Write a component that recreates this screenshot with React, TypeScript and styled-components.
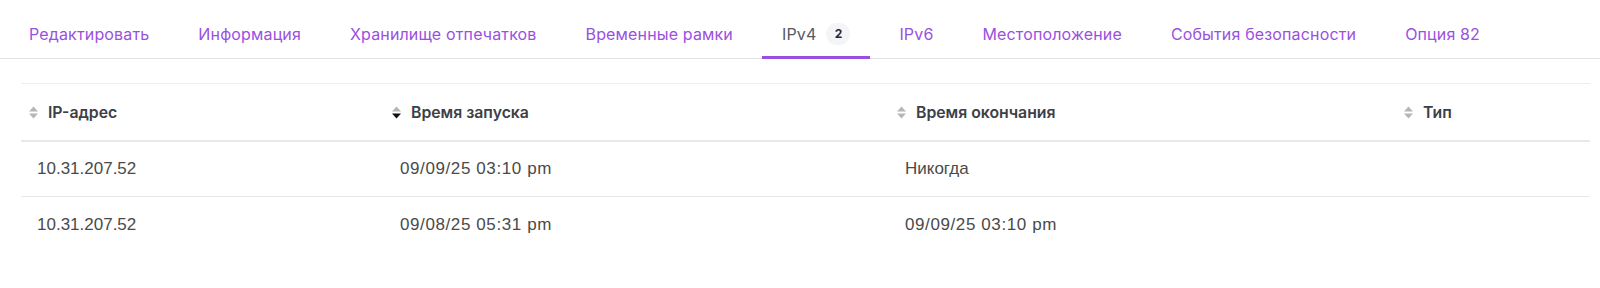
import React from "react";
import styled, { createGlobalStyle } from "styled-components";

const GlobalStyle = createGlobalStyle`
  html, body { margin: 0; padding: 0; background: #ffffff; }
  body { font-family: Inter, "Noto Sans", sans-serif; }
  * { box-sizing: border-box; }
`;

const Page = styled.div`
  width: 1600px;
  background: #ffffff;
`;

const TabBar = styled.nav`
  display: flex;
  align-items: stretch;
  height: 59px;
  padding-left: 9px;
  gap: 9px;
  border-bottom: 1px solid #e3e3e6;
`;

const Tab = styled.div<{ $active?: boolean }>`
  display: flex;
  align-items: center;
  gap: 10px;
  height: 59px;
  margin-bottom: -1px;
  padding: 8px 20px 0;
  font-family: Inter, "Noto Sans", sans-serif;
  font-size: 16px;
  letter-spacing: 0.15px;
  font-weight: 400;
  color: ${(p) => (p.$active ? "#555a62" : "#9a50e0")};
  box-shadow: ${(p) => (p.$active ? "inset 0 -3px 0 #9b4fe0" : "none")};
  white-space: nowrap;
  cursor: pointer;
`;

const Badge = styled.span`
  display: inline-flex;
  align-items: center;
  justify-content: center;
  min-width: 24px;
  height: 22px;
  padding: 0 6px;
  border-radius: 11px;
  background: #f4f5f7;
  color: #25282d;
  font-size: 12px;
  letter-spacing: 0;
  font-weight: 700;
`;

const Table = styled.div`
  margin: 24px 10px 0 21px;
  border-top: 1px solid #eceef1;
`;

const Row = styled.div<{ $head?: boolean; $last?: boolean }>`
  display: grid;
  grid-template-columns: 363px 505px 507px 1fr;
  align-items: center;
  height: ${(p) => (p.$head ? "58px" : "55px")};
  border-bottom: ${(p) =>
    p.$head ? "2px solid #e6e8ec" : p.$last ? "none" : "1px solid #e8e9ec"};
`;

const HeadCell = styled.div`
  display: flex;
  align-items: center;
  gap: 10px;
  padding-left: 8px;
  font-family: Inter, "Noto Sans", sans-serif;
  font-size: 15.8px;
  font-weight: 600;
  color: #3c4047;
`;

const Cell = styled.div<{ $date?: boolean }>`
  padding-left: 16px;
  font-family: "Liberation Sans", Arial, sans-serif;
  font-size: 17px;
  letter-spacing: ${(p) => (p.$date ? "0.6px" : "0")};
  color: #4a4a4a;
`;

const SortIcon = ({ dir }: { dir?: "asc" | "desc" }) => (
  <svg width="9" height="13" viewBox="0 0 9 13" aria-hidden>
    <polygon points="0,5.5 4.5,0.5 9,5.5" fill={dir === "asc" ? "#111" : "#b4b6ba"} />
    <polygon points="0,7.5 4.5,12.5 9,7.5" fill={dir === "desc" ? "#111" : "#b4b6ba"} />
  </svg>
);

const tabs = [
  "Редактировать",
  "Информация",
  "Хранилище отпечатков",
  "Временные рамки",
  "IPv4",
  "IPv6",
  "Местоположение",
  "События безопасности",
  "Опция 82",
];

const columns: { label: string; dir?: "asc" | "desc" }[] = [
  { label: "IP-адрес" },
  { label: "Время запуска", dir: "desc" },
  { label: "Время окончания" },
  { label: "Тип" },
];

const rows = [
  ["10.31.207.52", "09/09/25 03:10 pm", "Никогда", ""],
  ["10.31.207.52", "09/08/25 05:31 pm", "09/09/25 03:10 pm", ""],
];

const isDate = (v: string) => /\d\d\/\d\d\/\d\d/.test(v);

export default function App() {
  return (
    <Page>
      <GlobalStyle />
      <TabBar>
        {tabs.map((t) => (
          <Tab key={t} $active={t === "IPv4"}>
            {t}
            {t === "IPv4" && <Badge>2</Badge>}
          </Tab>
        ))}
      </TabBar>
      <Table>
        <Row $head>
          {columns.map((c) => (
            <HeadCell key={c.label}>
              <SortIcon dir={c.dir} />
              {c.label}
            </HeadCell>
          ))}
        </Row>
        {rows.map((r, i) => (
          <Row key={i} $last={i === rows.length - 1}>
            {r.map((v, j) => (
              <Cell key={j} $date={isDate(v)}>
                {v}
              </Cell>
            ))}
          </Row>
        ))}
      </Table>
    </Page>
  );
}
